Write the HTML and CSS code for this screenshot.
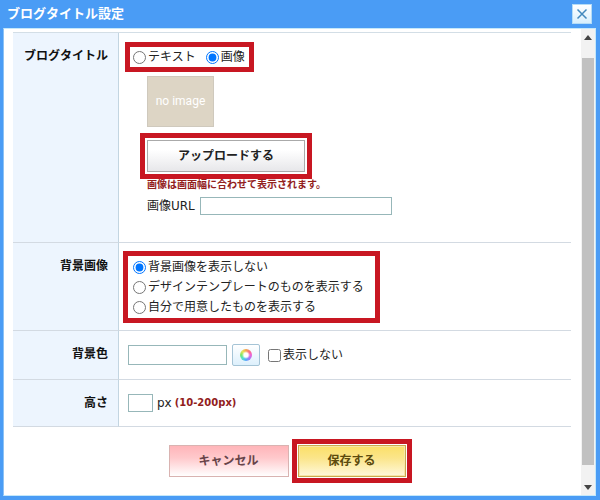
FILE: index.html
```html
<!DOCTYPE html>
<html lang="ja">
<head>
<meta charset="utf-8">
<title>ブログタイトル設定</title>
<link rel="stylesheet" href="styles.css">
</head>
<body>
<form class="dialog">
  <header class="titlebar">
    <h1>ブログタイトル設定</h1>
    <button type="button" class="close" aria-label="閉じる">
      <svg width="12" height="12" viewBox="0 0 12 12"><path d="M1.5 1.5l9 9M10.5 1.5l-9 9" fill="none" stroke="#4389bd" stroke-width="1.5"/></svg>
    </button>
  </header>
  <div class="viewport">
    <main class="content">
      <table class="settings">
        <tbody>
          <tr class="row-title">
            <th scope="row">ブログタイトル</th>
            <td>
              <div class="mark mark-type">
                <label><input type="radio" name="type">テキスト</label>
                <label><input type="radio" name="type" checked>画像</label>
              </div>
              <div class="thumb">no image</div>
              <div class="mark mark-upload"><button type="button" class="btn upload">アップロードする</button></div>
              <p class="note">画像は画面幅に合わせて表示されます。</p>
              <label class="url">画像URL<input type="text" class="field"></label>
            </td>
          </tr>
          <tr class="row-image">
            <th scope="row">背景画像</th>
            <td>
              <div class="mark mark-bg">
                <label><input type="radio" name="bg" checked>背景画像を表示しない</label>
                <label><input type="radio" name="bg">デザインテンプレートのものを表示する</label>
                <label><input type="radio" name="bg">自分で用意したものを表示する</label>
              </div>
            </td>
          </tr>
          <tr class="row-color">
            <th scope="row"><label for="color">背景色</label></th>
            <td>
              <div class="line">
                <input type="text" id="color" class="field color">
                <button type="button" class="picker" aria-label="色を選択"><span class="wheel"></span></button>
                <label class="none"><input type="checkbox">表示しない</label>
              </div>
            </td>
          </tr>
          <tr class="row-height">
            <th scope="row"><label for="height">高さ</label></th>
            <td>
              <div class="line">
                <input type="text" id="height" class="field height">
                <span class="unit">px</span>
                <span class="range">(10-200px)</span>
              </div>
            </td>
          </tr>
        </tbody>
      </table>
      <div class="actions">
        <button type="button" class="btn cancel">キャンセル</button>
        <div class="mark mark-save"><button type="button" class="btn save">保存する</button></div>
      </div>
    </main>
    <div class="scrollbar">
      <svg width="8" height="5" viewBox="0 0 8 5"><path d="M0 5L4 0L8 5z" fill="#444"/></svg>
      <div class="scroll-thumb"></div>
      <svg width="8" height="5" viewBox="0 0 8 5"><path d="M0 0L4 5L8 0z" fill="#444"/></svg>
    </div>
  </div>
</form>
</body>
</html>
```
FILE: styles.css
```css
* {
  box-sizing: border-box;
}

body {
  margin: 0;
  color: #222;
  font: 12px/20px "DejaVu Sans", "Noto Sans CJK JP", sans-serif;
}

button,
input {
  margin: 0;
  padding: 0;
  font: inherit;
}

.dialog {
  display: flex;
  flex-direction: column;
  min-height: 100vh;
  padding: 0 4px 4px 3px;
  background: #4a9cf5;
}

.titlebar {
  display: flex;
  align-items: center;
  justify-content: space-between;
  height: 28px;
  padding: 0 4px;
}

h1 {
  margin: 0;
  color: #fff;
  font-size: 13px;
  line-height: 20px;
}

.close {
  display: flex;
  align-items: center;
  justify-content: center;
  width: 20px;
  height: 20px;
  border: 1px solid #b4dcf6;
  background: linear-gradient(#fff, #d8effd);
}

.viewport {
  display: flex;
  flex: 1;
  border: 1px solid #c4e8fa;
  border-left-color: #8cc2f5;
  background: #fff;
}

.content {
  flex: 1;
  padding: 3px 10px 0 9px;
}

.settings {
  width: 100%;
  border-collapse: separate;
  border-spacing: 0;
  border-top: 1px solid #d3dee6;
}

th,
td {
  padding: 0;
  border-bottom: 1px solid #d3dae2;
  vertical-align: top;
  text-align: left;
}

th {
  width: 106px;
  padding: 13px 10px 0 0;
  border-right: 1px solid #c3d5e1;
  background: #edf5fe;
  color: #111;
  text-align: right;
}

.row-title {
  height: 210px;
}

.row-image {
  height: 88px;
}

.row-color {
  height: 49px;
}

.row-height {
  height: 47px;
}

td {
  padding: 9px 0 0 9px;
}

td label {
  display: flex;
  align-items: center;
  white-space: nowrap;
}

input[type="radio"],
input[type="checkbox"] {
  width: 13px;
  height: 13px;
  margin-right: 2px;
}

.mark {
  width: fit-content;
  border: 5px solid #c81722;
}

.mark-type {
  display: flex;
  gap: 10px;
  margin-left: -3px;
  padding: 0 4px 0 3px;
}

.mark-bg {
  margin: -1px 0 0 -5px;
  padding: 1px 11px 1px 5px;
}

.thumb {
  width: 67px;
  height: 51px;
  margin: 4px 0 0 19px;
  border: 1px solid #cfc9bd;
  background: #ddd5c5;
  color: #fff;
  font: 12px/49px Roboto, sans-serif;
  text-align: center;
}

.mark-upload {
  margin: 6px 0 0 12px;
  padding: 2px;
}

.btn {
  display: block;
  width: 120px;
  height: 32px;
  border: 1px solid;
  font-weight: bold;
}

.upload {
  width: 158px;
  border-color: #aaa;
  background: linear-gradient(#fff 30%, #e7e7ea);
  color: #222;
}

.note {
  margin: 0 0 0 19px;
  color: #92201c;
  font-size: 10px;
  line-height: 12px;
  font-weight: bold;
}

.field {
  border: 1px solid #97b7b9;
  background: #fff;
}

.url {
  gap: 5px;
  margin: 5px 0 0 19px;
}

.url .field {
  width: 192px;
  height: 18px;
}

.line {
  display: flex;
  align-items: center;
}

.row-color .line {
  margin-top: 4px;
}

.row-height .line {
  margin-top: 4px;
}

.color {
  width: 99px;
  height: 20px;
}

.picker {
  display: flex;
  align-items: center;
  justify-content: center;
  width: 28px;
  height: 22px;
  margin-left: 5px;
  border: 1px solid #a5c4d6;
  border-radius: 2px;
  background: linear-gradient(#fff, #ddf0fc);
}

.wheel {
  width: 12px;
  height: 12px;
  border-radius: 50%;
  background:
    radial-gradient(circle, #fff 2px, transparent 4px),
    conic-gradient(#f5a54e, #fb7080, #ef62d8, #a478f6, #58a8fa, #55e0d0, #7ae66b, #e6e35a, #f5a54e);
}

.none {
  margin-left: 8px;
}

.height {
  width: 25px;
  height: 18px;
}

.unit {
  margin: 0 3px 0 4px;
}

.range {
  color: #92201c;
  font-size: 10px;
  font-weight: bold;
}

.actions {
  display: flex;
  align-items: center;
  justify-content: center;
  gap: 3px;
  margin-top: 12px;
  padding-right: 4px;
}

.cancel {
  border-color: #d9b3b1;
  background: linear-gradient(#ffb5b9, #ffc9cc 40%, #fff);
  color: #674449;
}

.mark-save {
  padding: 1px;
}

.save {
  width: 108px;
  border-color: #c9a94d;
  background: linear-gradient(#fbdf68, #fbe58a 40%, #fff9dc);
  box-shadow: inset 0 0 0 1px #f7e6a8;
  color: #5d4b0d;
}

.scrollbar {
  display: flex;
  flex-direction: column;
  align-items: center;
  width: 14px;
  padding: 6px 1px 5px;
  background: #f2f2f2;
}

.scroll-thumb {
  flex: 1;
  width: 100%;
  margin: 18px 0 20px;
  background: #c1c1c1;
}
```
